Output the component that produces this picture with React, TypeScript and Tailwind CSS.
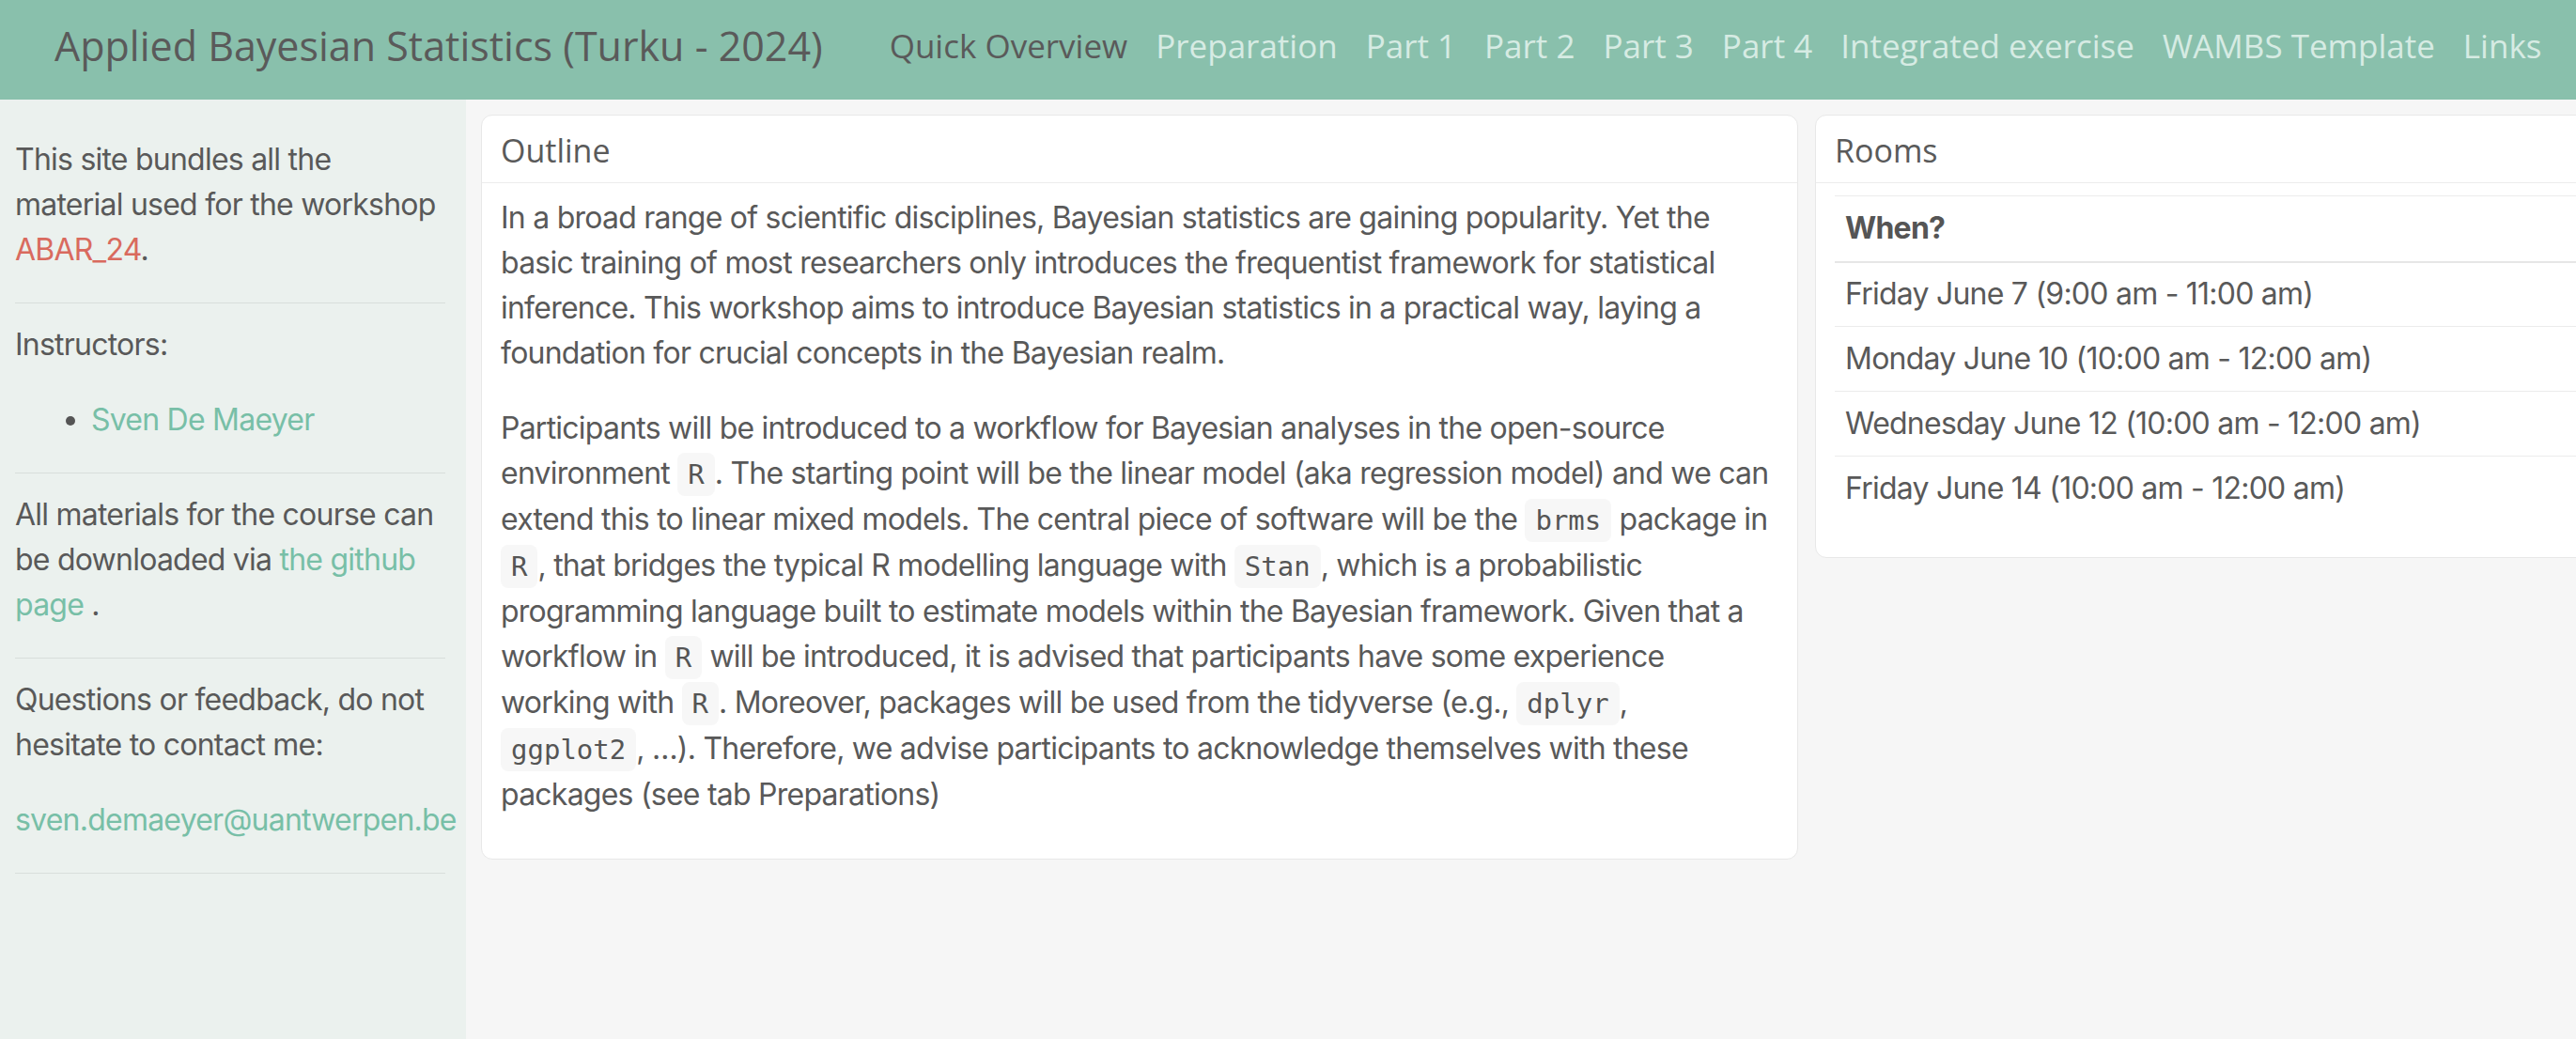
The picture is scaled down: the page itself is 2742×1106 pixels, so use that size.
import React from 'react'

const navLinks = [
  'Quick Overview',
  'Preparation',
  'Part 1',
  'Part 2',
  'Part 3',
  'Part 4',
  'Integrated exercise',
  'WAMBS Template',
  'Links',
]

const sessions = [
  'Friday June 7 (9:00 am - 11:00 am)',
  'Monday June 10 (10:00 am - 12:00 am)',
  'Wednesday June 12 (10:00 am - 12:00 am)',
  'Friday June 14 (10:00 am - 12:00 am)',
]

const heading = { fontFamily: '"Open Sans", "Noto Sans", sans-serif' }
const body = { fontFamily: 'Inter, "Noto Sans", sans-serif' }

function Code({ children }: { children: React.ReactNode }) {
  return (
    <code
      className="rounded-lg bg-[#f7f7f7] px-[11px] py-[6px] text-[29px] tracking-normal text-[#555]"
      style={{ fontFamily: '"DejaVu Sans Mono", "Liberation Mono", monospace' }}
    >
      {children}
    </code>
  )
}

function Card({ title, children, className }: { title: string; children: React.ReactNode; className: string }) {
  return (
    <div className={`self-start rounded-xl border border-[#e8e8e8] bg-white ${className}`}>
      <div
        className="flex h-[72px] items-center border-b border-[#ececec] px-5 pt-[2px] text-[34px] tracking-normal text-[#5a5a5a]"
        style={heading}
      >
        {title}
      </div>
      <div className="pt-[13px] pr-6 pb-3 pl-5">{children}</div>
    </div>
  )
}

export default function App() {
  return (
    <div
      className="flex h-screen flex-col overflow-hidden text-[32px] leading-[48px] tracking-[-0.024em] text-[#595959]"
      style={body}
    >
      <header className="flex h-[106px] shrink-0 items-center bg-[#89c0ac] pb-2 pl-[58px] tracking-normal" style={heading}>
        <span className="mr-[56px] whitespace-nowrap text-[43px] text-[#5a5a5a]">Applied Bayesian Statistics (Turku - 2024)</span>
        <nav className="flex whitespace-nowrap text-[35px]">
          {navLinks.map((link, i) => (
            <a key={link} className={`px-[15px] ${i === 0 ? 'text-[#5a5a5a]' : 'text-[#d6ebe3]'}`}>
              {link}
            </a>
          ))}
        </nav>
      </header>

      <div className="flex min-h-0 flex-1">
        <aside className="w-[496px] shrink-0 bg-[#ebf1ee] pt-10 pr-[22px] pl-4">
          <p className="mb-8">
            This site bundles all the material used for the workshop <span className="text-[#d96a5e]">ABAR_24</span>.
          </p>
          <hr className="my-5 border-[#d8dedb]" />
          <p className="mb-8">Instructors:</p>
          <ul className="mb-8 list-disc pl-[81px] marker:text-[#555]">
            <li className="text-[#78bfa7]">Sven De Maeyer</li>
          </ul>
          <hr className="my-5 border-[#d8dedb]" />
          <p className="mb-8">
            All materials for the course can be downloaded via <span className="text-[#78bfa7]">the github page</span> .
          </p>
          <hr className="my-5 border-[#d8dedb]" />
          <p className="mb-8">Questions or feedback, do not hesitate to contact me:</p>
          <p className="mb-8 whitespace-nowrap text-[#78bfa7]">sven.demaeyer@uantwerpen.be</p>
          <hr className="my-5 border-[#d8dedb]" />
        </aside>

        <main className="flex flex-1 gap-[18px] bg-[#f6f6f6] pt-4 pl-4">
          <Card title="Outline" className="w-[1402px] shrink-0">
            <p className="mb-8">
              In a broad range of scientific disciplines, Bayesian statistics are gaining popularity. Yet the basic training of most
              researchers only introduces the frequentist framework for statistical inference. This workshop aims to introduce
              Bayesian statistics in a practical way, laying a foundation for crucial concepts in the Bayesian realm.
            </p>
            <p className="mb-8">
              Participants will be introduced to a workflow for Bayesian analyses in the open-source environment <Code>R</Code>. The
              starting point will be the linear model (aka regression model) and we can extend this to linear mixed models. The
              central piece of software will be the <Code>brms</Code> package in <Code>R</Code>, that bridges the typical R
              modelling language with <Code>Stan</Code>, which is a probabilistic programming language built to estimate models
              within the Bayesian framework. Given that a workflow in <Code>R</Code> will be introduced, it is advised that
              participants have some experience working with <Code>R</Code>. Moreover, packages will be used from the tidyverse
              (e.g., <Code>dplyr</Code>, <Code>ggplot2</Code>, …). Therefore, we advise participants to acknowledge themselves with
              these packages (see tab Preparations)
            </p>
          </Card>

          <Card title="Rooms" className="w-[900px] shrink-0">
            <table className="mb-[26px] w-full border-t border-[#ececec]">
              <thead>
                <tr className="border-b-2 border-[#e6e6e6]">
                  <th className="h-[70px] px-[11px] text-left font-bold text-[#555]">When?</th>
                </tr>
              </thead>
              <tbody>
                {sessions.map((s, i) => (
                  <tr key={s} className={i < sessions.length - 1 ? 'border-b border-[#ececec]' : ''}>
                    <td className="h-[69px] px-[11px]">{s}</td>
                  </tr>
                ))}
              </tbody>
            </table>
          </Card>
        </main>
      </div>
    </div>
  )
}
